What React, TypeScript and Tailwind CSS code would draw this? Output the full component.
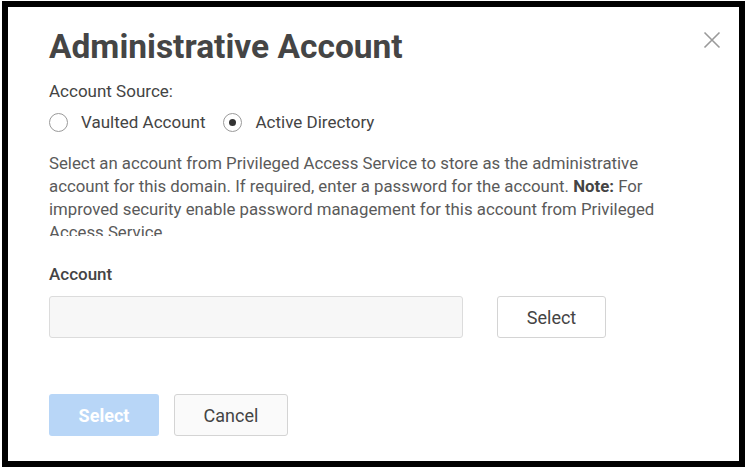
import React from "react";

export default function App() {
  return (
    <div className="w-[749px] h-[472px] bg-white pl-[2px] pt-[1px]" style={{ fontFamily: "Roboto, 'Liberation Sans', sans-serif" }}>
      <div className="relative w-[743px] h-[466px] border-[6px] border-black bg-white">
        <button className="absolute right-[18px] top-[24px] text-[#9a9a9a]" aria-label="Close">
          <svg width="18" height="18" viewBox="0 0 18 18" fill="none" stroke="currentColor" strokeWidth="1.6">
            <path d="M1.5 1.5 L16.5 16.5 M16.5 1.5 L1.5 16.5" />
          </svg>
        </button>
        <div className="pl-[41px] pt-[20px] flex flex-col">
          <h1 className="text-[33.5px] font-bold text-[#454545] leading-[40px]">Administrative Account</h1>
          <div className="mt-[14px] text-[17px] text-[#444] leading-[20px]">Account Source:</div>
          <div className="mt-[11px] flex items-center text-[17px] text-[#444] leading-[20px]">
            <label className="flex items-center">
              <span className="w-[19px] h-[19px] rounded-full border border-[#9a9a9a] bg-white" />
              <span className="ml-[13px]">Vaulted Account</span>
            </label>
            <label className="flex items-center ml-[18px]">
              <span className="w-[19px] h-[19px] rounded-full border border-[#9a9a9a] bg-white flex items-center justify-center">
                <span className="w-[7px] h-[7px] rounded-full bg-[#333]" />
              </span>
              <span className="ml-[13px]">Active Directory</span>
            </label>
          </div>
          <p className="mt-[20px] w-[660px] h-[84px] overflow-hidden whitespace-nowrap text-[16.8px] leading-[23px] text-[#5a5a5a]">
            Select an account from Privileged Access Service to store as the administrative
            <br />
            account for this domain. If required, enter a password for the account. <b className="font-bold text-[#444]">Note:</b> For
            <br />
            improved security enable password management for this account from Privileged
            <br />
            Access Service
          </p>
          <div className="mt-[28px] text-[17px] font-medium text-[#444] leading-[20px]">Account</div>
          <div className="mt-[12px] flex items-center">
            <div className="w-[414px] h-[42px] rounded-[3px] border border-[#dcdcdc] bg-[#f7f7f7]" />
            <button className="ml-[34px] w-[109px] h-[42px] rounded-[3px] border border-[#d4d4d4] bg-white text-[18px] text-[#444]">Select</button>
          </div>
          <div className="mt-[56px] flex items-center">
            <button className="w-[110px] h-[42px] rounded-[3px] bg-[#b8d6f7] text-white font-bold text-[18px]">Select</button>
            <button className="ml-[15px] w-[114px] h-[42px] rounded-[3px] border border-[#d4d4d4] bg-[#fafafa] text-[18px] text-[#444]">Cancel</button>
          </div>
        </div>
      </div>
    </div>
  );
}
